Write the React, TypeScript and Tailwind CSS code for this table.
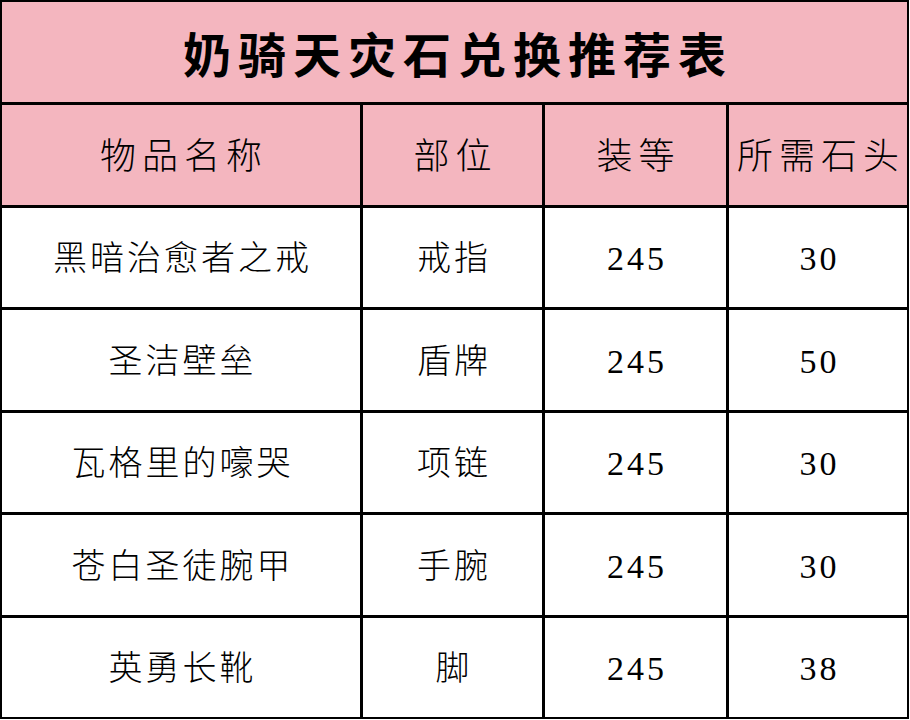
import React from "react";

const rows = [
  ["黑暗治愈者之戒", "戒指", "245", "30"],
  ["圣洁壁垒", "盾牌", "245", "50"],
  ["瓦格里的嚎哭", "项链", "245", "30"],
  ["苍白圣徒腕甲", "手腕", "245", "30"],
  ["英勇长靴", "脚", "245", "38"],
];

const headers = ["物品名称", "部位", "装等", "所需石头"];

export default function App() {
  return (
    <div className="w-[910px] h-[720px] bg-white">
      <div
        className="w-[909px] h-[719px] border-2 border-black bg-black grid grid-cols-[358px_179px_181px_178px] grid-rows-[100px_100px_99px_100px_99px_100px_99px] gap-[3px]"
        style={{ fontFamily: '"Liberation Serif", "Noto Sans CJK SC", serif' }}
      >
        <div
          className="col-span-4 bg-[#f4b6bf] flex items-center justify-center text-[48px] font-bold tracking-[7px] text-black pl-[7px]"
          style={{ fontFamily: '"Noto Sans CJK SC", sans-serif' }}
        >
          奶骑天灾石兑换推荐表
        </div>
        {headers.map((h) => (
          <div
            key={h}
            className="bg-[#f4b6bf] flex items-center justify-center text-[36px] font-light tracking-[6px] text-black pl-[6px] pt-[3px]"
          >
            {h}
          </div>
        ))}
        {rows.map((r, i) =>
          r.map((c, j) => (
            <div
              key={i + "-" + j}
              className="bg-white flex items-center justify-center text-[34px] font-light tracking-[3px] text-black pl-[3px] pt-[2px]"
            >
              {c}
            </div>
          ))
        )}
      </div>
    </div>
  );
}
